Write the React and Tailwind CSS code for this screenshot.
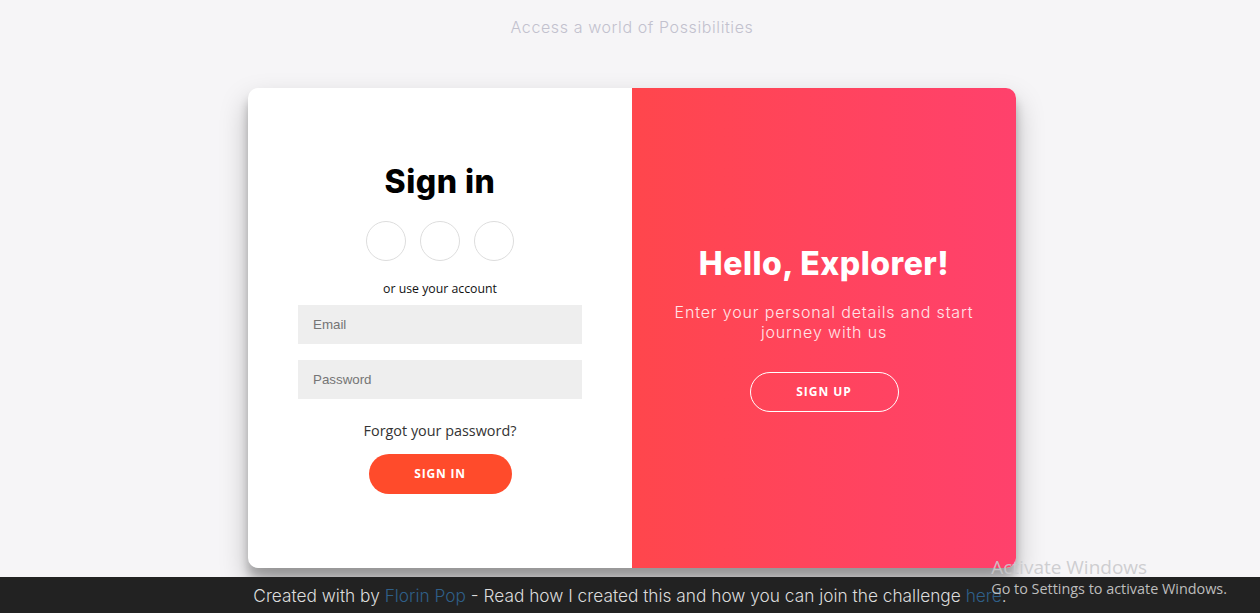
export default function App() {
  return (
    <div className="relative h-screen flex flex-col bg-[#f6f5f7] overflow-hidden" style={{ fontFamily: 'Inter, sans-serif' }}>
      <h2 className="text-center pl-[4px] pt-[17px] text-[16px] leading-[20px] font-light text-[#c2c1ce] tracking-[0.6px]">
        Access a world of Possibilities
      </h2>

      <div className="flex-1 flex justify-center pt-[51px] pl-[4px]">
        <div className="flex w-[768px] h-[480px] rounded-[10px] overflow-hidden bg-white shadow-[0_14px_28px_rgba(0,0,0,0.25),0_10px_10px_rgba(0,0,0,0.22)]">
          {/* sign in form */}
          <div className="w-[384px] flex flex-col items-center justify-center px-[50px]">
            <h1 className="text-[32px] leading-[39px] font-extrabold text-black tracking-[0.5px]">Sign in</h1>
            <div className="flex gap-[14px] my-[20px]">
              <span className="w-[40px] h-[40px] rounded-full border border-[#dddddd]" />
              <span className="w-[40px] h-[40px] rounded-full border border-[#dddddd]" />
              <span className="w-[40px] h-[40px] rounded-full border border-[#dddddd]" />
            </div>
            <span className="text-[12.3px] leading-[16px] text-[#111]" style={{ fontFamily: '"Open Sans", sans-serif' }}>
              or use your account
            </span>
            <div className="w-full mt-[8px] h-[39px] bg-[#eeeeee] flex items-center px-[15px] text-[13.33px] text-[#757575]" style={{ fontFamily: '"Liberation Sans", Arial, sans-serif' }}>
              Email
            </div>
            <div className="w-full mt-[16px] h-[39px] bg-[#eeeeee] flex items-center px-[15px] text-[13.33px] text-[#757575]" style={{ fontFamily: '"Liberation Sans", Arial, sans-serif' }}>
              Password
            </div>
            <a className="mt-[23px] text-[14.4px] leading-[17px] text-[#333]" style={{ fontFamily: '"Open Sans", sans-serif' }}>
              Forgot your password?
            </a>
            <button className="mt-[15px] h-[40px] w-[143px] rounded-full bg-[#ff4b2b] text-white text-[12px] font-bold tracking-[0.8px]" style={{ fontFamily: '"Open Sans", sans-serif' }}>
              SIGN IN
            </button>
          </div>

          {/* overlay */}
          <div className="w-[384px] flex flex-col items-center justify-center px-[30px] bg-gradient-to-r from-[#ff464c] to-[#ff416c] text-white">
            <h1 className="text-[32px] leading-[39px] font-extrabold tracking-[0.5px]">Hello, Explorer!</h1>
            <p className="mt-[19px] text-center text-[16px] leading-[20px] font-light tracking-[0.85px] text-[#ffe4e8]">
              Enter your personal details and start journey with us
            </p>
            <button className="mt-[30px] h-[40px] w-[149px] rounded-full border border-white text-white text-[12px] font-bold tracking-[1px]" style={{ fontFamily: '"Open Sans", sans-serif' }}>
              SIGN UP
            </button>
          </div>
        </div>
      </div>

      <footer className="h-[36px] bg-[#222222] flex items-center justify-center pt-[2px] text-[17.3px] font-light text-[#dcdcdc]">
        <p>
          Created with by <a className="text-[#2f5f88]">Florin Pop</a> - Read how I created this and how you can join the challenge <a className="text-[#2f5f88]">here</a>.
        </p>
      </footer>

      <div className="absolute right-[33px] bottom-[14px] flex flex-col pointer-events-none" style={{ fontFamily: '"Open Sans", sans-serif' }}>
        <span className="text-[19px] leading-[24px] text-[#c9c9cc]/90">Activate Windows</span>
        <span className="text-[14.4px] leading-[20px] text-[#bdbdbd]">Go to Settings to activate Windows.</span>
      </div>
    </div>
  )
}
